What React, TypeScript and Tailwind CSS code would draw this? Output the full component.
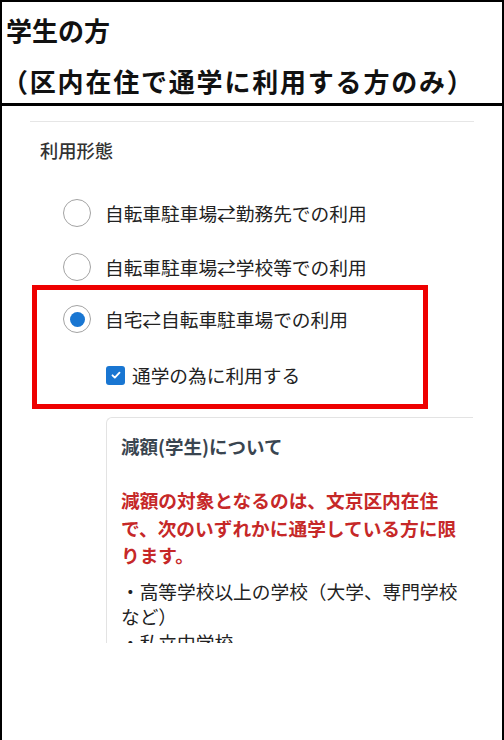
import React from 'react'

const jp = { fontFamily: '"Noto Sans CJK JP", "Noto Sans", sans-serif' }

const Radio: React.FC<{ checked?: boolean; label: string; h: string }> = ({ checked, label, h }) => (
  <div className={`flex items-center pl-[33px] ${h}`}>
    <span className="flex h-[28px] w-[28px] shrink-0 items-center justify-center rounded-full border-[1.5px] border-[#a3a3a3] bg-white">
      {checked && <span className="h-[15px] w-[15px] rounded-full bg-[#1976d2]" />}
    </span>
    <span className="ml-[14px] text-[18.7px] leading-[26px] text-[#222]">{label}</span>
  </div>
)

export default function App() {
  return (
    <div className="h-[740px] w-[504px] overflow-hidden border-x-2 border-t-2 border-black bg-white" style={jp}>
      <div className="border-b-[3px] border-black pl-[4px] pt-[3px] text-[26px] font-bold text-[#111]">
        <div className="leading-[50px]">学生の方</div>
        <div className="-ml-[4px] mt-[4px] leading-[44px] tracking-[1.8px]">（区内在住で通学に利用する方のみ）</div>
      </div>

      <div className="relative h-[537px] overflow-hidden pt-[15px]">
        <div className="ml-[28px] w-[444px] border-t border-[#e6e6e6]">
          <div className="mt-[16px] pl-[10px] text-[18.3px] font-medium leading-[24px] text-[#333]">利用形態</div>

          <div className="mt-[24px]">
            <Radio label="自転車駐車場⇄勤務先での利用" h="h-[54px]" />
            <Radio label="自転車駐車場⇄学校等での利用" h="h-[54px]" />
            <Radio checked label="自宅⇄自転車駐車場での利用" h="h-[50px]" />
            <div className="flex h-[62px] items-center pl-[76px]">
              <span className="flex h-[19px] w-[19px] items-center justify-center rounded-[3px] bg-[#1976d2]">
                <svg viewBox="0 0 24 24" className="h-[14px] w-[14px]" fill="none" stroke="white" strokeWidth="3.2" strokeLinecap="round" strokeLinejoin="round">
                  <path d="M6 12.5l4 4 8-8.5" />
                </svg>
              </span>
              <span className="ml-[7px] text-[18.7px] leading-[26px] text-[#222]">通学の為に利用する</span>
            </div>
          </div>

          <div className="ml-[76px] mr-[1px] mt-[11px] rounded-tl-[6px] border-l border-t border-[#e3e3e3] px-[14px] pt-[14px]">
            <div className="text-[18.5px] font-bold leading-[28px] text-[#3a4550]">減額(学生)について</div>
            <div className="mt-[26px] text-[18.7px] font-bold leading-[27.5px] text-[#c62828]">
              減額の対象となるのは、文京区内在住で、次のいずれかに通学している方に限ります。
            </div>
            <div className="mt-[9px] text-[18.7px] leading-[25.5px] text-[#222]">
              <div>・高等学校以上の学校（大学、専門学校など）</div>
              <div>・私立中学校</div>
            </div>
          </div>
        </div>

        <div className="pointer-events-none absolute left-[30px] top-[179px] h-[124px] w-[396px] border-[5px] border-[#ee0000]" />
      </div>
    </div>
  )
}
